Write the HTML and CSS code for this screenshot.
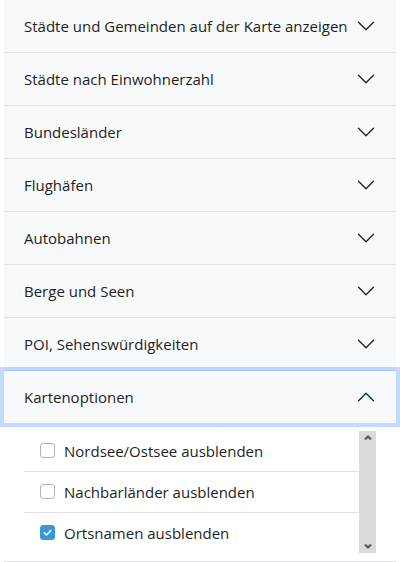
FILE: index.html
```html
<!DOCTYPE html>
<html lang="de">
<head>
<meta charset="utf-8">
<title>Kartenoptionen</title>
<link rel="stylesheet" href="styles.css">
</head>
<body>
<div class="accordion">
  <div class="item">
    <button class="hdr"><span class="title">Städte und Gemeinden auf der Karte anzeigen</span><svg class="chev" viewBox="0 0 16 16"><path d="M2 5L8 11L14 5"/></svg></button>
  </div>
  <div class="item">
    <button class="hdr"><span class="title">Städte nach Einwohnerzahl</span><svg class="chev" viewBox="0 0 16 16"><path d="M2 5L8 11L14 5"/></svg></button>
  </div>
  <div class="item">
    <button class="hdr"><span class="title">Bundesländer</span><svg class="chev" viewBox="0 0 16 16"><path d="M2 5L8 11L14 5"/></svg></button>
  </div>
  <div class="item">
    <button class="hdr"><span class="title">Flughäfen</span><svg class="chev" viewBox="0 0 16 16"><path d="M2 5L8 11L14 5"/></svg></button>
  </div>
  <div class="item">
    <button class="hdr"><span class="title">Autobahnen</span><svg class="chev" viewBox="0 0 16 16"><path d="M2 5L8 11L14 5"/></svg></button>
  </div>
  <div class="item">
    <button class="hdr"><span class="title">Berge und Seen</span><svg class="chev" viewBox="0 0 16 16"><path d="M2 5L8 11L14 5"/></svg></button>
  </div>
  <div class="item">
    <button class="hdr"><span class="title">POI, Sehenswürdigkeiten</span><svg class="chev" viewBox="0 0 16 16"><path d="M2 5L8 11L14 5"/></svg></button>
  </div>
  <div class="item open">
    <button class="hdr focus"><span class="title">Kartenoptionen</span><svg class="chev up" viewBox="0 0 16 16"><path d="M2 11L8 5L14 11"/></svg></button>
    <div class="body">
      <div class="scrollbox">
        <ul class="list">
          <li class="opt"><span class="box"></span><span class="lbl">Nordsee/Ostsee ausblenden</span></li>
          <li class="opt"><span class="box"></span><span class="lbl">Nachbarländer ausblenden</span></li>
          <li class="opt"><span class="box checked"><svg viewBox="0 0 16 16"><path d="M4 8.5L6.8 11L12 5.5"/></svg></span><span class="lbl">Ortsnamen ausblenden</span></li>
        </ul>
        <div class="sbar">
          <svg class="sarrow" viewBox="0 0 10 8"><path d="M2 5.5L5 2.5L8 5.5"/></svg>
          <svg class="sarrow" viewBox="0 0 10 8"><path d="M2 2.5L5 5.5L8 2.5"/></svg>
        </div>
      </div>
    </div>
  </div>
</div>
</body>
</html>
```
FILE: styles.css
```css
* { box-sizing: border-box; }
html, body { margin: 0; padding: 0; background: #fff; }
body {
  font-family: "Open Sans", "Noto Sans", sans-serif;
  font-size: 15px;
  color: #1c1f23;
}
.accordion {
  margin: 0 4px;
}
.hdr {
  display: flex;
  align-items: center;
  width: 100%;
  height: 53px;
  padding: 0 20px;
  border: 0;
  border-bottom: 1px solid #dee2e6;
  background: #f8f9fa;
  font: inherit;
  color: #1c1f23;
  text-align: left;
}
.title { flex: 1; white-space: nowrap; }
.chev {
  width: 20px;
  height: 20px;
  flex: none;
  fill: none;
  stroke: #212529;
  stroke-width: 1.1;
  stroke-linecap: round;
  stroke-linejoin: round;
}
.chev.up { stroke: #052c65; }
.hdr.focus {
  position: relative;
  z-index: 1;
  height: 52px;
  border-bottom: 0;
  box-shadow: 0 0 0 4px rgba(13, 110, 253, 0.25);
}
.body {
  padding: 8px 20px;
  border-bottom: 1px solid #dee2e6;
  background: #fff;
}
.scrollbox {
  display: flex;
  height: 122px;
  overflow: hidden;
}
.list {
  flex: 1;
  list-style: none;
  margin: 0;
  padding: 0;
}
.opt {
  display: flex;
  align-items: center;
  height: 41px;
  padding: 0 16px 1px;
  border-bottom: 1px solid #dee2e6;
}
.box {
  width: 15px;
  height: 15px;
  flex: none;
  margin-right: 9px;
  border: 1px solid #b4b4b4;
  border-radius: 3px;
  background: #fff;
  display: flex;
  align-items: center;
  justify-content: center;
}
.box.checked {
  background: #3498db;
  border-color: #3498db;
}
.box svg {
  width: 13px;
  height: 13px;
  fill: none;
  stroke: #fff;
  stroke-width: 2;
  stroke-linecap: round;
  stroke-linejoin: round;
}
.sbar {
  width: 17px;
  flex: none;
  background: #dcdcdc;
  display: flex;
  flex-direction: column;
  justify-content: space-between;
  align-items: center;
  padding: 3px 0 3px;
}
.sarrow {
  width: 10px;
  height: 8px;
  fill: none;
  stroke: #5a5a5a;
  stroke-width: 2.2;
  stroke-linecap: butt;
  stroke-linejoin: miter;
}
```
